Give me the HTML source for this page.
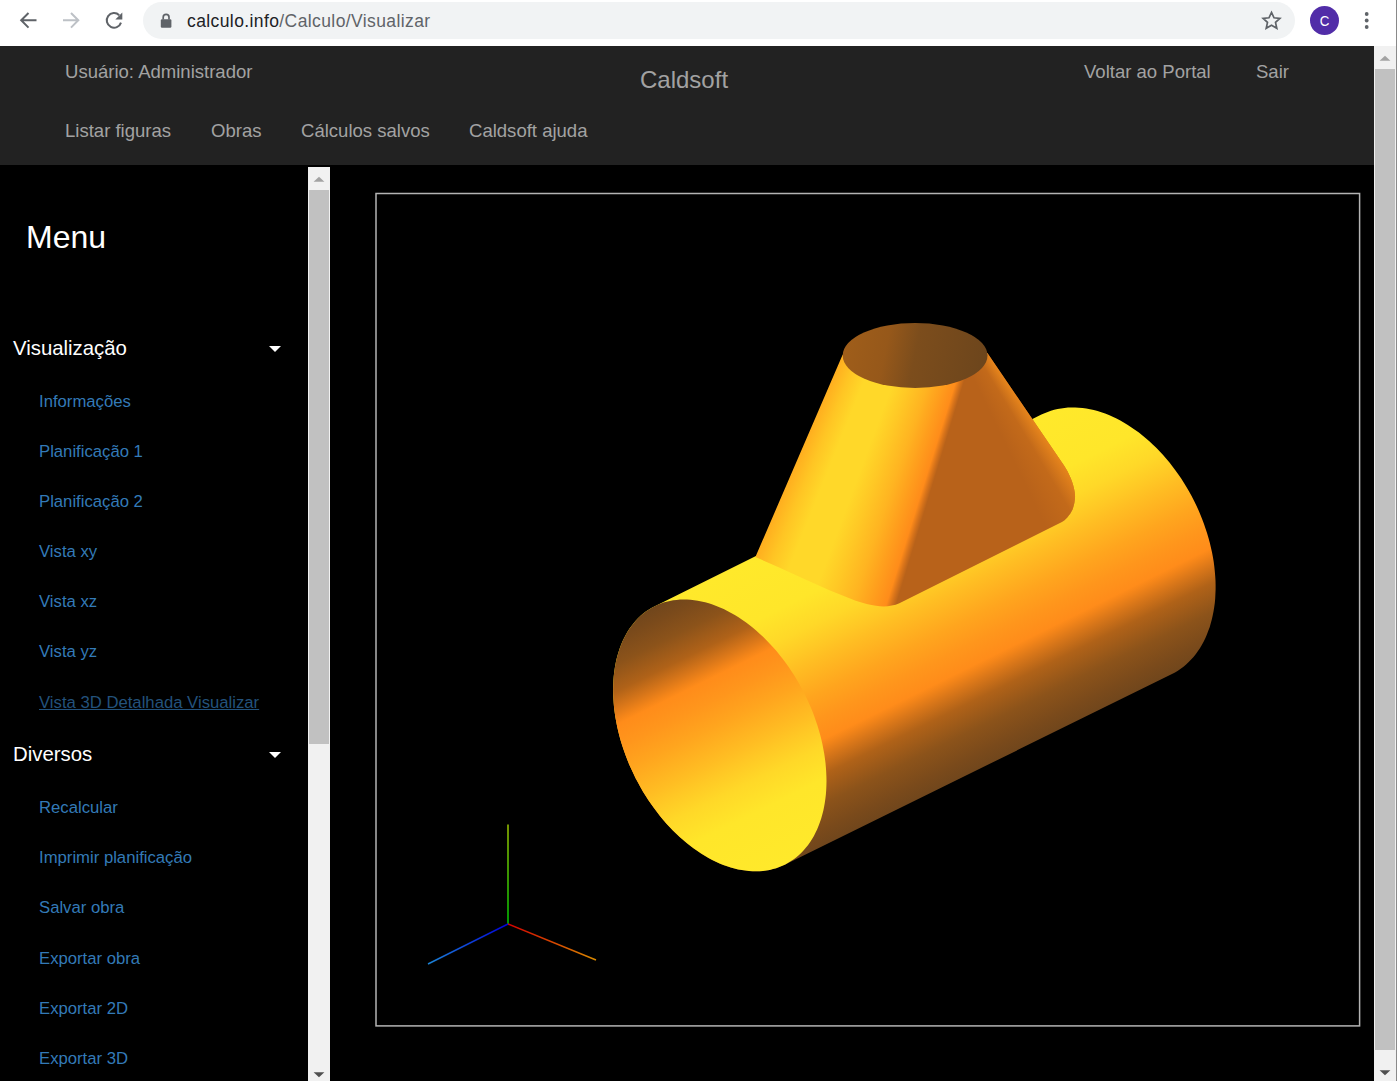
<!DOCTYPE html>
<html lang="pt-br">
<head>
<meta charset="utf-8">
<title>Caldsoft - Visualizar</title>
<style>
html,body{margin:0;padding:0;}
body{width:1400px;height:1081px;overflow:hidden;background:#000;position:relative;font-family:"Liberation Sans",sans-serif;}
.abs{position:absolute;}
#chrome{left:0;top:0;width:1400px;height:46px;background:#fff;}
#omni{left:143px;top:2px;width:1152px;height:37px;border-radius:19px;background:#f1f3f4;}
#url{left:187px;top:10px;font-size:17.5px;line-height:22px;color:#202124;white-space:nowrap;letter-spacing:0.4px;}
#url span{color:#5f6368;}
#avatar{left:1310px;top:6px;width:29px;height:29px;border-radius:50%;background:#512da8;color:#fff;font-size:15.5px;line-height:29.500px;text-align:center;}
#avatar span{display:inline-block;transform:scaleX(0.86);}
#header{left:0;top:46px;width:1374px;height:119px;background:#222;}
.nav{color:#a2a2a2;font-size:18.55px;line-height:24px;white-space:nowrap;}
#brand{color:#a2a2a2;font-size:24px;line-height:28px;white-space:nowrap;}
#menu{color:#fff;font-size:32px;line-height:40px;}
.sec{color:#fff;font-size:20.36px;line-height:26px;white-space:nowrap;}
.lnk{color:#337ab7;font-size:16.7px;line-height:22px;white-space:nowrap;}
.lnk.hov{color:#23527c;text-decoration:underline;}
.caret{width:0;height:0;border-left:6px solid transparent;border-right:6px solid transparent;border-top:6px solid #fff;}
.sb{background:#f1f1f1;}
.thumb{background:#c1c1c1;}
#cone{left:0;top:0;width:1400px;height:1081px;
 clip-path:path("M842.6,354.8 L755.4,557 L778.6,567.3 L804.3,578.9 L830,590.4 L855.7,600.7 C864,603.5 870,605 876,605.8 C884,607 892,606.5 899.4,603.3 L1061.4,522.3 C1065,520.5 1070,515 1072.6,509.4 C1075,503 1075.5,497 1074.7,492 C1073.5,483 1069,473 1064,465.4 L987.4,353 Z");
 background:
  conic-gradient(from 0deg at 898px 224px, rgba(240,140,28,0.85) 145.3deg, rgba(215,120,26,0.35) 149deg, rgba(200,110,26,0.0) 154deg, rgba(0,0,0,0) 360deg),
  conic-gradient(from 0deg at 1282.2px -664.6px, #b8621a 0deg, #b8621a 196.92deg, #d9741a 197.12deg, #ff8c1a 197.33deg, #ffa01d 198.02deg, #ffb421 198.7deg, #ffc825 199.6deg, #ffd829 200.4deg, #ffd829 201.8deg, #ffc524 202.6deg, #ffae1f 203.33deg, #ffae1f 360deg);
}
</style>
</head>
<body>
<!-- browser chrome -->
<div id="chrome" class="abs">
  <div id="omni" class="abs"></div>
  <svg class="abs" style="left:0;top:0" width="1400" height="46" viewBox="0 0 1400 46" fill="none">
    <!-- back -->
    <path d="M36.5 20.3H21.5M28.5 13l-7.3 7.3 7.3 7.3" stroke="#5f6368" stroke-width="2"/>
    <!-- forward -->
    <path d="M63 20.3H78M71 13l7.3 7.3L71 27.6" stroke="#bdc1c6" stroke-width="2"/>
    <!-- reload -->
    <path d="M119.2 15.2A7.3 7.3 0 1 0 121 22.6" stroke="#5f6368" stroke-width="2"/>
    <path d="M122.3 12.6v7h-7z" fill="#5f6368"/>
    <!-- lock -->
    <rect x="160.8" y="19.2" width="10.6" height="8.6" rx="1.2" fill="#5f6368"/>
    <path d="M163.2 19.5v-2.2a2.9 2.9 0 0 1 5.8 0v2.2" stroke="#5f6368" stroke-width="1.7"/>
    <!-- star -->
    <path d="M1271.5 12.4l2.5 5.4 5.9.6-4.4 4 1.3 5.8-5.3-3-5.3 3 1.3-5.800-4.400-4 5.900-.6z" stroke="#5f6368" stroke-width="1.7" stroke-linejoin="miter"/>
    <!-- menu dots -->
    <circle cx="1366.700" cy="14" r="1.900" fill="#5f6368"/><circle cx="1366.700" cy="20.500" r="1.900" fill="#5f6368"/><circle cx="1366.700" cy="27" r="1.900" fill="#5f6368"/>
  </svg>
  <div id="url" class="abs">calculo.info<span>/Calculo/Visualizar</span></div>
  <div id="avatar" class="abs"><span>C</span></div>
</div>

<!-- page header -->
<div id="header" class="abs"></div>
<div class="abs nav" style="left:65px;top:60px">Usuário: Administrador</div>
<div class="abs" id="brand" style="left:640px;top:65.500px">Caldsoft</div>
<div class="abs nav" style="left:1084px;top:60px">Voltar ao Portal</div>
<div class="abs nav" style="left:1256px;top:60px">Sair</div>
<div class="abs nav" style="left:65px;top:119px">Listar figuras</div>
<div class="abs nav" style="left:211px;top:119px">Obras</div>
<div class="abs nav" style="left:301px;top:119px">Cálculos salvos</div>
<div class="abs nav" style="left:469px;top:119px">Caldsoft ajuda</div>

<!-- sidebar -->
<div class="abs" id="menu" style="left:26px;top:217px">Menu</div>
<div class="abs sec" style="left:13px;top:335px">Visualização</div>
<div class="abs caret" style="left:269px;top:346px"></div>
<div class="abs lnk" style="left:39px;top:391px">Informações</div>
<div class="abs lnk" style="left:39px;top:441px">Planificação 1</div>
<div class="abs lnk" style="left:39px;top:491px">Planificação 2</div>
<div class="abs lnk" style="left:39px;top:541px">Vista xy</div>
<div class="abs lnk" style="left:39px;top:591px">Vista xz</div>
<div class="abs lnk" style="left:39px;top:641px">Vista yz</div>
<div class="abs lnk hov" style="left:39px;top:692px">Vista 3D Detalhada Visualizar</div>
<div class="abs sec" style="left:13px;top:741px">Diversos</div>
<div class="abs caret" style="left:269px;top:752px"></div>
<div class="abs lnk" style="left:39px;top:797px">Recalcular</div>
<div class="abs lnk" style="left:39px;top:847px">Imprimir planificação</div>
<div class="abs lnk" style="left:39px;top:897px">Salvar obra</div>
<div class="abs lnk" style="left:39px;top:948px">Exportar obra</div>
<div class="abs lnk" style="left:39px;top:998px">Exportar 2D</div>
<div class="abs lnk" style="left:39px;top:1048px">Exportar 3D</div>

<!-- sidebar scrollbar -->
<div class="abs sb" style="left:308px;top:167px;width:22px;height:914px"></div>
<div class="abs thumb" style="left:309.200px;top:189.500px;width:19.500px;height:554px"></div>
<svg class="abs" style="left:308px;top:167px" width="22" height="914" viewBox="0 0 22 914">
  <path d="M5.600 14.800L11 9.700l5.400 5.100z" fill="#a3a3a3"/>
  <path d="M5.600 905.200L11 910.300l5.400-5.100z" fill="#505050"/>
</svg>

<!-- 3D canvas -->
<svg class="abs" style="left:0;top:0" width="1400" height="1081" viewBox="0 0 1400 1081"><rect x="376" y="193.500" width="983.600" height="832.400" fill="#000" stroke="#b4b4b4" stroke-width="1.500"/></svg>
<svg class="abs" style="left:0;top:0" width="1400" height="1081" viewBox="0 0 1400 1081">
  <defs>
    <linearGradient id="gBodyAbs" gradientUnits="userSpaceOnUse" x1="849.1" y1="509.9" x2="977.4" y2="769.9">
      <stop offset="0.000" stop-color="#ffe92b"/>
      <stop offset="0.200" stop-color="#ffe62a"/>
      <stop offset="0.300" stop-color="#ffd828"/>
      <stop offset="0.370" stop-color="#ffc825"/>
      <stop offset="0.410" stop-color="#ffbe23"/>
      <stop offset="0.520" stop-color="#ffa51e"/>
      <stop offset="0.600" stop-color="#ff961c"/>
      <stop offset="0.670" stop-color="#ff8c1a"/>
      <stop offset="0.690" stop-color="#f28419"/>
      <stop offset="0.725" stop-color="#d87619"/>
      <stop offset="0.780" stop-color="#b06218"/>
      <stop offset="0.870" stop-color="#8c531a"/>
      <stop offset="0.950" stop-color="#7a4a1b"/>
      <stop offset="1.000" stop-color="#70461c"/>
    </linearGradient>
    <linearGradient id="gIn" gradientUnits="userSpaceOnUse" x1="655.8" y1="605.3" x2="783.8" y2="865.5">
      <stop offset="0.000" stop-color="#70461c"/>
      <stop offset="0.047" stop-color="#7a4a1b"/>
      <stop offset="0.122" stop-color="#8c531a"/>
      <stop offset="0.207" stop-color="#b06218"/>
      <stop offset="0.258" stop-color="#d87619"/>
      <stop offset="0.291" stop-color="#f28419"/>
      <stop offset="0.310" stop-color="#ff8c1a"/>
      <stop offset="0.382" stop-color="#ff961c"/>
      <stop offset="0.464" stop-color="#ffa51e"/>
      <stop offset="0.578" stop-color="#ffbe23"/>
      <stop offset="0.619" stop-color="#ffc825"/>
      <stop offset="0.691" stop-color="#ffd828"/>
      <stop offset="0.794" stop-color="#ffe62a"/>
      <stop offset="1.000" stop-color="#ffe92b"/>
    </linearGradient>
    <linearGradient id="gTop" gradientUnits="userSpaceOnUse" x1="842" y1="340" x2="988" y2="370">
      <stop offset="0" stop-color="#a05e1a"/>
      <stop offset="0.3" stop-color="#96581a"/>
      <stop offset="0.5" stop-color="#7c4d1c"/>
      <stop offset="1" stop-color="#6c451c"/>
    </linearGradient>
    <linearGradient id="gx" x1="0" y1="0" x2="1" y2="0"><stop offset="0" stop-color="#d40000"/><stop offset="1" stop-color="#d88a00"/></linearGradient>
    <linearGradient id="gy" x1="0" y1="1" x2="0" y2="0"><stop offset="0" stop-color="#00c800"/><stop offset="1" stop-color="#9cc400"/></linearGradient>
    <linearGradient id="gz" x1="1" y1="0" x2="0" y2="0"><stop offset="0" stop-color="#0000d8"/><stop offset="1" stop-color="#1c84d4"/></linearGradient>
  </defs>
  <!-- cylinder body -->
  <g transform="translate(0,0)">
    <path d="M1172.0,674.1 L785.3,864.4 L782.4,865.8 L779.3,867.1 L776.2,868.2 L773.0,869.1 L769.7,869.9 L766.4,870.5 L763.0,870.9 L759.6,871.2 L756.1,871.3 L752.6,871.3 L749.0,871.0 L745.4,870.6 L741.8,870.1 L738.2,869.4 L734.5,868.5 L730.8,867.5 L727.1,866.3 L723.3,864.9 L719.6,863.4 L715.9,861.7 L712.2,859.9 L708.5,857.9 L704.8,855.8 L701.1,853.5 L697.5,851.1 L693.8,848.5 L690.2,845.8 L686.7,843.0 L683.2,840.0 L679.7,836.9 L676.3,833.7 L672.9,830.4 L669.6,826.9 L666.3,823.4 L663.1,819.7 L660.0,815.9 L657.0,812.1 L654.0,808.1 L651.1,804.0 L648.3,799.9 L645.6,795.7 L642.9,791.4 L640.4,787.0 L638.0,782.6 L635.6,778.2 L633.4,773.6 L631.3,769.1 L629.2,764.4 L627.3,759.8 L625.5,755.1 L623.9,750.4 L622.3,745.7 L620.8,740.9 L619.5,736.2 L618.3,731.5 L617.2,726.7 L616.3,722.0 L615.4,717.3 L614.7,712.6 L614.1,707.9 L613.7,703.3 L613.4,698.7 L613.2,694.2 L613.1,689.7 L613.2,685.2 L613.4,680.8 L613.7,676.5 L614.2,672.3 L614.8,668.1 L615.5,664.1 L616.3,660.1 L617.3,656.2 L618.4,652.4 L619.6,648.7 L621.0,645.1 L622.4,641.6 L624.0,638.2 L625.7,634.9 L627.5,631.8 L629.4,628.8 L631.5,625.9 L633.6,623.2 L635.9,620.6 L638.2,618.1 L640.6,615.8 L643.2,613.6 L645.8,611.6 L648.6,609.7 L651.4,608.0 L654.3,606.4 L1041.4,414.6 L1044.5,413.2 L1047.7,411.9 L1050.9,410.8 L1054.2,409.8 L1057.6,409.0 L1061.0,408.4 L1064.5,407.9 L1068.0,407.6 L1071.6,407.4 L1075.2,407.5 L1078.8,407.7 L1082.5,408.0 L1086.3,408.5 L1090.0,409.2 L1093.8,410.1 L1097.6,411.1 L1101.3,412.3 L1105.1,413.6 L1108.9,415.1 L1112.7,416.8 L1116.5,418.6 L1120.3,420.6 L1124.1,422.7 L1127.8,425.0 L1131.5,427.4 L1135.2,429.9 L1138.9,432.6 L1142.5,435.5 L1146.1,438.4 L1149.6,441.5 L1153.0,444.7 L1156.5,448.1 L1159.8,451.5 L1163.1,455.1 L1166.3,458.8 L1169.5,462.5 L1172.5,466.4 L1175.5,470.4 L1178.4,474.5 L1181.2,478.6 L1184.0,482.9 L1186.6,487.2 L1189.1,491.5 L1191.6,496.0 L1193.9,500.5 L1196.1,505.0 L1198.2,509.6 L1200.2,514.3 L1202.1,519.0 L1203.9,523.7 L1205.5,528.4 L1207.1,533.2 L1208.5,537.9 L1209.8,542.7 L1210.9,547.5 L1212.0,552.3 L1212.9,557.0 L1213.7,561.8 L1214.3,566.5 L1214.8,571.2 L1215.2,575.9 L1215.5,580.5 L1215.6,585.1 L1215.6,589.6 L1215.4,594.1 L1215.2,598.5 L1214.8,602.9 L1214.2,607.2 L1213.5,611.4 L1212.7,615.5 L1211.8,619.6 L1210.7,623.5 L1209.6,627.4 L1208.2,631.1 L1206.8,634.7 L1205.3,638.3 L1203.6,641.7 L1201.8,645.0 L1199.9,648.2 L1197.8,651.2 L1195.7,654.2 L1193.5,656.9 L1191.1,659.6 L1188.7,662.1 L1186.1,664.5 L1183.5,666.7 L1180.7,668.8 L1177.9,670.7 L1175.0,672.4Z" fill="url(#gBodyAbs)"/>
  </g>
  <!-- front opening -->
  <path d="M785.3,864.4 L782.4,865.8 L779.3,867.1 L776.2,868.2 L773.0,869.1 L769.7,869.9 L766.4,870.5 L763.0,870.9 L759.6,871.2 L756.1,871.3 L752.6,871.3 L749.0,871.0 L745.4,870.6 L741.8,870.1 L738.2,869.4 L734.5,868.5 L730.8,867.5 L727.1,866.3 L723.3,864.9 L719.6,863.4 L715.9,861.7 L712.2,859.9 L708.5,857.9 L704.8,855.8 L701.1,853.5 L697.5,851.1 L693.8,848.5 L690.2,845.8 L686.7,843.0 L683.2,840.0 L679.7,836.9 L676.3,833.7 L672.9,830.4 L669.6,826.9 L666.3,823.4 L663.1,819.7 L660.0,815.9 L657.0,812.1 L654.0,808.1 L651.1,804.0 L648.3,799.9 L645.6,795.7 L642.9,791.4 L640.4,787.0 L638.0,782.6 L635.6,778.2 L633.4,773.6 L631.3,769.1 L629.2,764.4 L627.3,759.8 L625.5,755.1 L623.9,750.4 L622.3,745.7 L620.8,740.9 L619.5,736.2 L618.3,731.5 L617.2,726.7 L616.3,722.0 L615.4,717.3 L614.7,712.6 L614.1,707.9 L613.7,703.3 L613.4,698.7 L613.2,694.2 L613.1,689.7 L613.2,685.2 L613.4,680.8 L613.7,676.5 L614.2,672.3 L614.8,668.1 L615.5,664.1 L616.3,660.1 L617.3,656.2 L618.4,652.4 L619.6,648.7 L621.0,645.1 L622.4,641.6 L624.0,638.2 L625.7,634.9 L627.5,631.8 L629.4,628.8 L631.5,625.9 L633.6,623.2 L635.9,620.6 L638.2,618.1 L640.6,615.8 L643.2,613.6 L645.8,611.6 L648.6,609.7 L651.4,608.0 L654.3,606.4 L657.2,605.0 L660.3,603.7 L663.4,602.6 L666.6,601.7 L669.9,600.9 L673.2,600.3 L676.6,599.9 L680.0,599.6 L683.5,599.5 L687.0,599.5 L690.6,599.8 L694.2,600.2 L697.8,600.7 L701.4,601.4 L705.1,602.3 L708.8,603.3 L712.5,604.5 L716.3,605.9 L720.0,607.4 L723.7,609.1 L727.4,610.9 L731.1,612.9 L734.8,615.0 L738.5,617.3 L742.1,619.7 L745.8,622.3 L749.4,625.0 L752.9,627.8 L756.4,630.8 L759.9,633.9 L763.3,637.1 L766.7,640.4 L770.0,643.9 L773.3,647.4 L776.5,651.1 L779.6,654.9 L782.6,658.7 L785.6,662.7 L788.5,666.8 L791.3,670.9 L794.0,675.1 L796.7,679.4 L799.2,683.8 L801.6,688.2 L804.0,692.6 L806.2,697.2 L808.3,701.7 L810.4,706.4 L812.3,711.0 L814.1,715.7 L815.7,720.4 L817.3,725.1 L818.8,729.9 L820.1,734.6 L821.3,739.3 L822.4,744.1 L823.3,748.8 L824.2,753.5 L824.9,758.2 L825.5,762.9 L825.9,767.5 L826.2,772.1 L826.4,776.6 L826.5,781.1 L826.4,785.6 L826.2,790.0 L825.9,794.3 L825.4,798.5 L824.8,802.7 L824.1,806.7 L823.3,810.7 L822.3,814.6 L821.2,818.4 L820.0,822.1 L818.6,825.7 L817.2,829.2 L815.6,832.6 L813.9,835.9 L812.1,839.0 L810.2,842.0 L808.1,844.9 L806.0,847.6 L803.7,850.2 L801.4,852.7 L799.0,855.0 L796.4,857.2 L793.8,859.2 L791.0,861.1 L788.2,862.8Z" fill="url(#gIn)"/>
  <!-- axes -->
  <line x1="508" y1="924" x2="508.010" y2="824.500" stroke="url(#gy)" stroke-width="1.500"/>
  <line x1="508" y1="924" x2="596" y2="960" stroke="url(#gx)" stroke-width="1.500"/>
  <line x1="508" y1="924" x2="428" y2="964" stroke="url(#gz)" stroke-width="1.500"/>
</svg>
<div id="cone" class="abs"></div>
<svg class="abs" style="left:0;top:0" width="1400" height="1081" viewBox="0 0 1400 1081">
  <ellipse cx="915.1" cy="355.500" rx="72.400" ry="32.400" fill="url(#gTop)"/>
</svg>

<!-- page scrollbar -->
<div class="abs sb" style="left:1373.500px;top:46px;width:23px;height:1035px"></div>
<div class="abs thumb" style="left:1375.200px;top:68.500px;width:19.500px;height:981px"></div>
<svg class="abs" style="left:1374px;top:46px" width="22" height="1035" viewBox="0 0 22 1035">
  <path d="M5.600 14.800L11 9.700l5.400 5.100z" fill="#a3a3a3"/>
  <path d="M5.600 1024.200L11 1029.300l5.400-5.100z" fill="#505050"/>
</svg>
<!-- window edge -->
<div class="abs" style="left:1396.500px;top:0;width:3.500px;height:1081px;background:#fff"></div>
<div class="abs" style="left:1396px;top:0;width:1.200px;height:1081px;background:#8a8a8a"></div>
</body>
</html>
